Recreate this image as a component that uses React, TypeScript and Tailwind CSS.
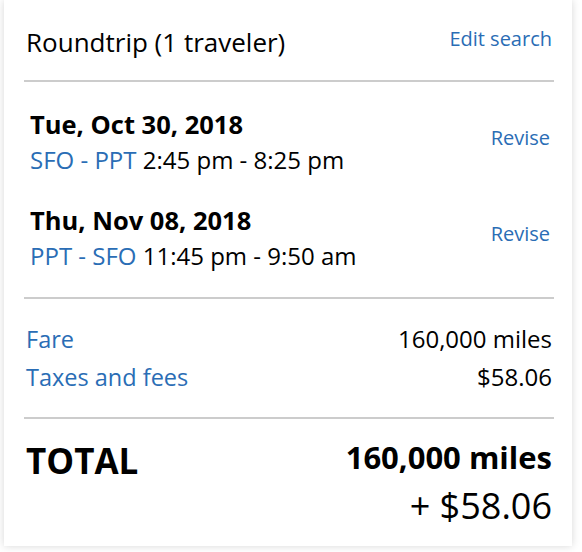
import React from "react";

const blue = "text-[#2a6db5]";

interface Segment {
  date: string;
  route: string;
  times: string;
}

const segments: Segment[] = [
  { date: "Tue, Oct 30, 2018", route: "SFO - PPT", times: "2:45 pm - 8:25 pm" },
  { date: "Thu, Nov 08, 2018", route: "PPT - SFO", times: "11:45 pm - 9:50 am" },
];

function Divider() {
  return <div className="h-[2px] bg-[#cccccc]" />;
}

export default function App() {
  return (
    <div
      className="w-[582px] h-[552px] overflow-hidden bg-white pl-[4px] pr-[10px]"
      style={{ fontFamily: '"Open Sans", "DejaVu Sans", sans-serif' }}
    >
      <div className="bg-white shadow-[0_0_8px_rgba(0,0,0,0.16)] pl-[20px] pr-[18px] h-[546px] text-black">
        {/* Header */}
        <div className="flex justify-between items-start pt-[27px] pb-[23px]">
          <span className="text-[26px] leading-[30px] pl-[2px]">Roundtrip (1 traveler)</span>
          <a className={`text-[20px] leading-[24px] pr-[2px] ${blue}`}>Edit search</a>
        </div>
        <Divider />

        {/* Flights */}
        <div className="pt-[27px] pb-[27px] pl-[6px] pr-[4px]">
          {segments.map((s, i) => (
            <div key={s.date} className={`flex justify-between items-center ${i > 0 ? "mt-[31px]" : ""}`}>
              <div>
                <div className="text-[25.5px] leading-[30px] font-bold">{s.date}</div>
                <div className="mt-[7px] text-[24px] leading-[28px]">
                  <span className={blue}>{s.route}</span> {s.times}
                </div>
              </div>
              <a className={`text-[20px] leading-[24px] mb-[7px] ${blue}`}>Revise</a>
            </div>
          ))}
        </div>
        <Divider />

        {/* Fare breakdown */}
        <div className="pt-[21px] pb-[21px] pl-[2px] pr-[2px]">
          <div className="flex justify-between items-center leading-[38px]">
            <span className={`text-[23.5px] ${blue}`}>Fare</span>
            <span className="text-[24px]">160,000 miles</span>
          </div>
          <div className="flex justify-between items-center leading-[38px]">
            <span className={`text-[23.5px] ${blue}`}>Taxes and fees</span>
            <span className="text-[24px]">$58.06</span>
          </div>
        </div>
        <Divider />

        {/* Total */}
        <div className="flex justify-between items-start pt-[18px] pl-[2px] pr-[2px]">
          <span className="mt-[4px] text-[35px] leading-[40px] font-bold">TOTAL</span>
          <div className="text-right">
            <div className="text-[31px] leading-[40px] font-bold">160,000 miles</div>
            <div className="mt-[5px] text-[36px] leading-[48px]">+ $58.06</div>
          </div>
        </div>
      </div>
    </div>
  );
}
